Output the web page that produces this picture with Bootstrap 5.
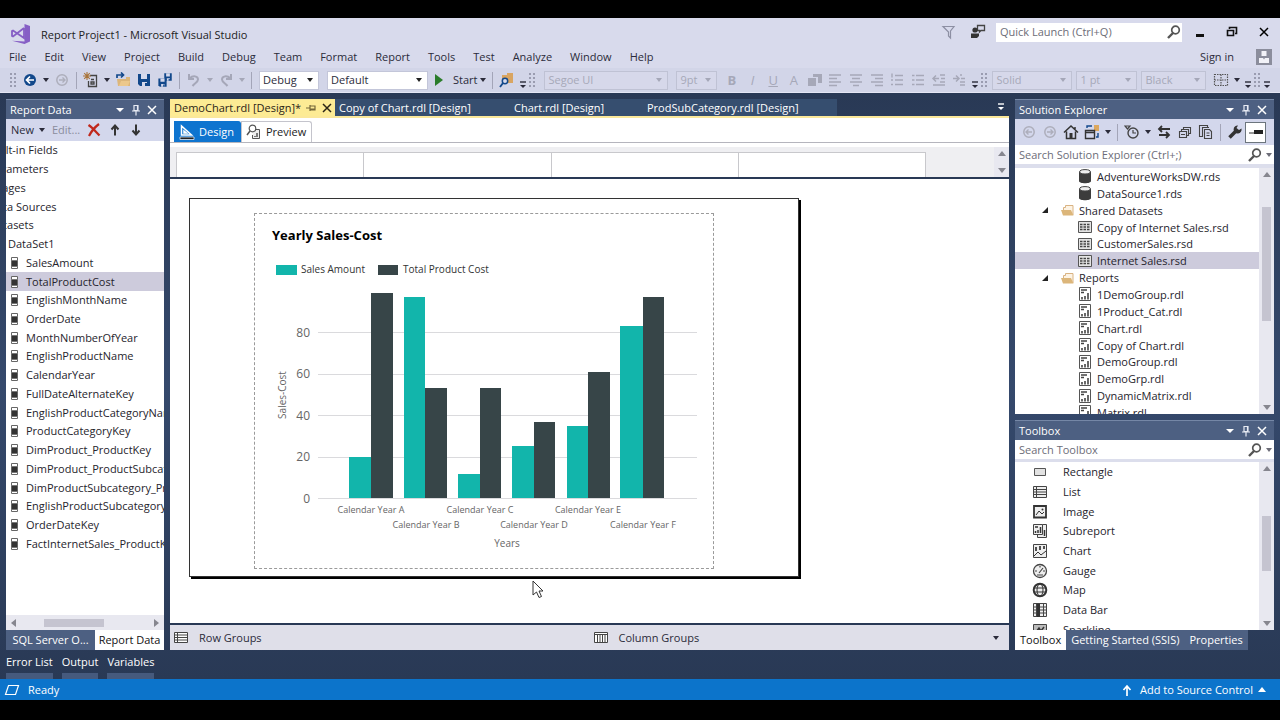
<!DOCTYPE html>
<html lang="en">
<head>
<meta charset="utf-8">
<meta name="viewport" content="width=device-width, initial-scale=1">
<title>Report Project1 - Microsoft Visual Studio</title>
<link href="https://cdn.jsdelivr.net/npm/bootstrap@5.3.0/dist/css/bootstrap.min.css" rel="stylesheet">
<style>
:root{--ink:#2b2b3a;--chrome:#d8daec;--head:#4d6082;--sel:#cdcbdc;--track:#e8e8f0;--thumb:#c5c4d0}
body{background:#000;color:var(--ink);font:11px/16px "Open Sans","Noto Sans",sans-serif}
button,input,select{font:inherit;color:inherit}
button{border:0;background:none;padding:0;white-space:nowrap}
a{color:inherit;text-decoration:none}
svg{display:block;flex:none}
.ic{width:16px;height:16px}
.ide{height:100vh;min-height:500px;border-top:18px solid #000;border-bottom:20px solid #000;overflow:hidden}
.chrome{background:var(--chrome)}
.titlebar{height:28px}
.logo{margin:4px 10px 0 11px}
.caption{color:#222;padding-top:6px}
.menubar{height:22px}
.menubar a{padding:0 9px}
.avatar{margin:0 8px 0 13px}
.toolbar{height:25px;background:#d2d5e8;padding-left:9px;overflow:hidden;border-bottom:1px solid #e4e6f4}
.grip{width:8px;height:17px;flex:none;background:radial-gradient(#9a9cb0 1px,transparent 1px) 0 0/4px 4px}
.grip:first-child{margin-right:2px}
.tb{width:21px;height:21px;flex:none;display:flex;align-items:center;justify-content:center}
.arr{width:11px;height:21px;flex:none;display:flex;align-items:center;justify-content:center}
.arr::before{content:"";border:3px solid transparent;border-top:4px solid #2b2b3a;border-bottom:0}
.arr.off::before{border-top-color:#a5a7b8}
.over{width:11px;height:21px;flex:none;display:flex;align-items:flex-end;justify-content:center;padding-bottom:2px}
.sepr{width:8px;height:17px;flex:none;background:linear-gradient(#a3a5b8,#a3a5b8) center/1px 100% no-repeat}
.combo{height:19px;flex:none;border:1px solid #c3c6d9;background:#fff url("data:image/svg+xml,%3Csvg xmlns='http://www.w3.org/2000/svg' width='7' height='4'%3E%3Cpath d='M0 0h6L3 4z' fill='%23222'/%3E%3C/svg%3E") right 4px center/7px 4px no-repeat;appearance:none;padding:0 3px;line-height:16px;border-radius:0}
.combo:disabled{opacity:1;color:#a6a8b8;background-color:#d6d8ea;border-color:#bfc2d4;background-image:url("data:image/svg+xml,%3Csvg xmlns='http://www.w3.org/2000/svg' width='7' height='4'%3E%3Cpath d='M0 0h6L3 4z' fill='%23a5a7b8'/%3E%3C/svg%3E")}
.fmt{width:248px;color:#a6a8b8;flex:none}
.fmt .tb{width:auto;flex:1}
.glyph{font-size:13px;line-height:16px}
.find{background:#fff;height:19px}
.find input{border:0;outline:0;background:none;min-width:0;padding:0 4px;line-height:16px}
.find input::placeholder{color:#6d6d78;opacity:1}
.find .arr::before{border-top-color:#6d6d78}
.quick{width:186px;margin-right:2px}
.work{background:linear-gradient(#293955,#35496c 50%,#293955);padding:6px 6px 0;min-height:0}
.cols{display:grid;grid-template-columns:158px minmax(0,1fr) 259px;gap:6px;min-height:0}
.pane{min-height:0;overflow:hidden}
.pane-head{height:20px;flex:none;background:var(--head);color:#fff;padding:0 4px;border-top:1px solid #7587a6}
.pane-tools{background:#d3d7ec;flex:none}
.data-tools{height:22px;padding-left:5px}
.data-tools .arr{margin:0 4px 0 3px}
.data-tools .arr + button{margin-right:3px;color:#8a8c9c}
.sol-tools{height:26px;padding-left:3px}
.clip{min-height:0;overflow:hidden;background:#fff;position:relative}
.fill{display:flex;flex-direction:column}
.fill>*{flex:1 1 0;display:flex;align-items:center;white-space:nowrap;color:#26242c}
.fields{height:412px}
.fields .root{margin-left:-17px}
.fields .leaf{padding-left:2px;gap:6px}
.on{background:var(--sel)}
.sol{height:253px;line-height:15px}
.sol .file{padding-left:62px;gap:4px}
.sol .dir{padding-left:26px;gap:3px}
.tools{height:177px;line-height:16px}
.tools>*{padding-left:17px;gap:15px}
.vsb{width:15px;flex:none;background:var(--track);padding:4px 0}
.vsb .bar{width:9px;background:var(--thumb)}
.up,.dn{border:4px solid transparent;height:0;width:0}
.up{border-bottom:5px solid #86868f;border-top:0}
.dn{border-top:5px solid #86868f;border-bottom:0}
.hsb{height:15px;flex:none;background:var(--track);padding:0 5px}
.hsb .bar{width:60px;height:8px;background:var(--thumb);margin-left:28px}
.lf,.rt{border:4px solid transparent}
.lf{border-right:5px solid #86868f;border-left:0}
.rt{border-left:5px solid #86868f;border-right:0}
.dock{height:20px;flex:none}
.dock button{background:var(--head);color:#fff;padding:0 5px}
.dock .cur{background:#fff;color:#111}
.doctabs{height:19px;flex:none;border-bottom:2px solid #fbe89a}
.doctabs button{background:#364e6f;color:#fff;height:17px;line-height:17px;text-align:left}
.doctabs .cur{background:#fdeb94;color:#2b2416}
.viewtabs{height:25px;flex:none;background:#fff;border-bottom:1px solid #b5b5bd}
.viewtabs button{height:21px;padding:0 4px;gap:4px;border:1px solid #c4c4cc;border-bottom:0;border-radius:0 3px 0 0;background:#fff;color:#222;margin-top:3px}
.viewtabs .cur{background:#0e74cf;color:#fff;border-color:#0e74cf}
.ruler{height:36px;flex:none;background:#efeff2;border-top:4px solid #fff;border-bottom:2px solid #293955}
.cells{width:750px;height:25px;margin-left:6px;border:1px solid #c8c8cc;border-bottom:0;background:#fff;align-self:flex-end}
.cells i{flex:1;border-left:1px solid #c8c8cc}
.cells i:first-child{border:0}
.canvas{background:#fff;min-height:0;overflow:hidden;padding:19px}
.sheet{width:610px;height:379px;border:1px solid #333;box-shadow:3px 3px 0 -1px #000,2px 2px 0 #000;background:#fff;padding:14px 0 0 64px}
.chart{width:458px;height:354px;border:1px dashed #9a9a9a;box-sizing:content-box}
.chart text{fill:#666}
.ptr{position:absolute;left:362px;top:401px}
.groups{height:27px;flex:none;background:#dfdfe9;border-top:2px solid #293955}
.groups>div{gap:10px;padding-left:3px}
.autohide{height:29px;flex:none;color:#fff;gap:9px}
.autohide a{border-bottom:6px solid #465a7d;height:26px;line-height:18px}
.status{height:21px;flex:none;background:#0c74cb;color:#fff}
.status button{gap:5px;margin-right:14px}
.status .up{border-bottom-color:#fff}
.winbtn{width:32px;height:20px;display:flex;align-items:center;justify-content:center}
</style>
</head>
<body>
<svg width="0" height="0" class="position-absolute" aria-hidden="true">
<symbol id="field" viewBox="0 0 12 16"><path d="M3.500 2.500h6v11h-6z" fill="#fff" stroke="#666"/><path d="M4 6h5v5H4z" fill="#333"/><path d="M3 5.500h7M3 11.500h7" stroke="#777"/></symbol>
<symbol id="db" viewBox="0 0 16 16"><path d="M2 3.500v9.500c0 3 12 3 12 0V3.500z" fill="#3c3c3c"/><ellipse cx="8" cy="3.800" rx="5.300" ry="2.200" fill="#eee" stroke="#444"/></symbol>
<symbol id="folder" viewBox="0 0 16 16"><path d="M3.500 12V5.500h2V3.500h7.500V13" fill="#fdf3e4" stroke="#d9b383"/><path d="M1 8h10l2.500 5.500H3z" fill="#dcb67a"/></symbol>
<symbol id="grid" viewBox="0 0 16 16"><path d="M1.500 2.500h13v11h-13z" fill="#e4e4e4" stroke="#555"/><path d="M3 5.500h10M3 8h10M3 10.500h10" stroke="#444" stroke-width="1.400" stroke-dasharray="2.500 1"/></symbol>
<symbol id="rdl" viewBox="0 0 16 16"><path d="M2.500 1.500h11v13h-11z" fill="#fff" stroke="#555"/><path d="M4 4h6M4 6.500h3M5 11v2.500M8 10v3.500M11 7v6.500" stroke="#444" stroke-width="1.600"/></symbol>
<symbol id="exp" viewBox="0 0 8 8"><path d="M7 1v6H1z" fill="#222"/></symbol>
<symbol id="lens" viewBox="0 0 16 16"><circle cx="9.500" cy="6" r="3.800" fill="none" stroke="#555" stroke-width="1.700"/><path d="M7 9l-5 5" stroke="#555" stroke-width="2.400"/></symbol>
<symbol id="pin" viewBox="0 0 16 16"><path d="M6 3.500h4v5H6zM4 9h8M8 9v4.500M9.500 3v6" stroke="#e6eaf3" fill="none" stroke-width="1.200"/></symbol>
<symbol id="x" viewBox="0 0 16 16"><path d="M4 4l8 8M12 4l-8 8" stroke="currentColor" stroke-width="1.500"/></symbol>
<symbol id="down" viewBox="0 0 16 16"><path d="M4 6h8l-4 4z" fill="currentColor"/></symbol>
<symbol id="more" viewBox="0 0 8 8"><path d="M1 1h6" stroke="currentColor" stroke-width="1.400"/><path d="M1 4h6L4 7z" fill="currentColor"/></symbol>
<symbol id="back" viewBox="0 0 16 16"><circle cx="8" cy="8" r="6" fill="#12488b"/><path d="M12 8H5M8 4.500L4.500 8 8 11.500" stroke="#fff" stroke-width="1.700" fill="none"/></symbol>
<symbol id="ring" viewBox="0 0 16 16"><circle cx="8" cy="8" r="5.200" fill="none" stroke="#adaebb" stroke-width="1.500"/><path d="M5 8h6M8.500 5.500L11 8l-2.500 2.500" stroke="#adaebb" stroke-width="1.400" fill="none"/></symbol>
<symbol id="undo" viewBox="0 0 16 16"><path d="M3 2v5h5M3.500 6.500C7 3 12 4 12 7.500 12 10 9 11 6.500 14" fill="none" stroke="#a5a7b8" stroke-width="2"/></symbol>
<symbol id="disk" viewBox="0 0 16 16"><path d="M2 2h12v12H4l-2-2z" fill="#12488b"/><path d="M5 2h6v5H5zM6 10h5v4H6z" fill="#d5d9ec"/><path d="M9 11h2v3H9z" fill="#12488b"/></symbol>
</svg>

<div class="ide d-flex flex-column">
<header class="chrome flex-shrink-0">
  <div class="titlebar d-flex align-items-center">
    <svg class="logo" width="20" height="20" viewBox="0 0 20 20"><path d="M13.500 0L19 2v15.500L13.500 20 1 16.800l12.500.7z" fill="#865fc5"/><path d="M13 4v10L2 6.500 1 7v5l1 .5L13 4" fill="none" stroke="#865fc5" stroke-width="1.800"/></svg>
    <span class="caption">Report Project1 - Microsoft Visual Studio</span>
    <div class="ms-auto d-flex align-items-center">
      <button class="tb me-2" aria-label="Notifications"><svg class="ic" viewBox="0 0 16 16"><path d="M2 2.500h11L9.500 7v7L7.500 12V8z" fill="none" stroke="#8d8fa3" stroke-width="1.200"/></svg></button>
      <button class="tb me-2" aria-label="Feedback"><svg class="ic" viewBox="0 0 16 16"><path d="M7.500 1.500h7v5H11L9.500 8V6.500h-2z" fill="none" stroke="#444" stroke-width="1.300"/><circle cx="5" cy="6" r="2.600" fill="#333"/><path d="M1 9.500h8v2.500l-2 2H1z" fill="#333"/></svg></button>
      <div class="find quick d-flex align-items-center"><input class="flex-fill" type="text" aria-label="Quick Launch" placeholder="Quick Launch (Ctrl+Q)"><svg class="ic"><use href="#lens"/></svg></div>
      <button class="winbtn" aria-label="Minimize"><svg width="10" height="12"><path d="M1 8h8v3H1z" fill="#111"/></svg></button>
      <button class="winbtn" aria-label="Restore"><svg width="12" height="12"><path d="M3.500 3V1.500h7v6H9M1.500 4.500h6v5h-6z" fill="none" stroke="#111" stroke-width="1.600"/></svg></button>
      <button class="winbtn text-black" aria-label="Close"><svg class="ic"><use href="#x"/></svg></button>
    </div>
  </div>
  <nav class="menubar d-flex align-items-center">
    <a href="#">File</a><a href="#">Edit</a><a href="#">View</a><a href="#">Project</a><a href="#">Build</a><a href="#">Debug</a><a href="#">Team</a><a href="#">Format</a><a href="#">Report</a><a href="#">Tools</a><a href="#">Test</a><a href="#">Analyze</a><a href="#">Window</a><a href="#">Help</a>
    <a href="#" class="ms-auto">Sign in</a>
    <svg class="avatar" width="16" height="16"><path d="M0 0h16v16H0z" fill="#8b8d9c"/><path d="M5.500 2h5v5h-5zM3 9h4l1 1.500L9 9h4v5H3z" fill="#f2f2f8"/></svg>
  </nav>
  <div class="toolbar d-flex align-items-center">
    <span class="grip"></span>
    <button class="tb" aria-label="Back"><svg class="ic"><use href="#back"/></svg></button><span class="arr"></span>
    <button class="tb" aria-label="Forward"><svg class="ic"><use href="#ring"/></svg></button><span class="sepr"></span>
    <button class="tb" aria-label="New project"><svg class="ic" viewBox="0 0 16 16"><path d="M7 3.500h6.500v11h-8V9M8 7.500h3M8 10h3v2H8z" fill="none" stroke="#444" stroke-width="1.300"/><path d="M4 0v8M0 4h8M1.200 1.200l5.600 5.600M6.800 1.200L1.200 6.800" stroke="#a8743a" stroke-width="1.100"/></svg></button><span class="arr"></span>
    <button class="tb" aria-label="Open"><svg class="ic" viewBox="0 0 16 16"><path d="M2 7h9V5h4v9H3z" fill="#dcb67a"/><path d="M6 9h9l-2 5H4z" fill="#ecc88c"/><path d="M2 6V3h6M6 .5L8.500 3 6 5.500" fill="none" stroke="#12488b" stroke-width="1.700"/></svg></button>
    <button class="tb" aria-label="Save"><svg class="ic"><use href="#disk"/></svg></button>
    <button class="tb" aria-label="Save all"><svg class="ic" viewBox="0 0 16 16"><use href="#disk" x="6" y="0" width="10" height="10"/><use href="#disk" x="0" y="5" width="11" height="11"/></svg></button><span class="sepr"></span>
    <button class="tb" aria-label="Undo"><svg class="ic"><use href="#undo"/></svg></button><span class="arr off"></span>
    <button class="tb" aria-label="Redo"><svg class="ic" viewBox="0 0 16 16"><use href="#undo" transform="matrix(-1 0 0 1 16 0)"/></svg></button><span class="arr off"></span><span class="sepr"></span>
    <select class="combo ms-1" style="width:60px" aria-label="Configuration"><option>Debug</option></select>
    <select class="combo ms-2" style="width:101px" aria-label="Platform"><option>Default</option></select>
    <button class="d-flex align-items-center"><span class="tb me-1"><svg width="10" height="12"><path d="M1 0l8 6-8 6z" fill="#2b7d2b"/></svg></span>Start<span class="arr"></span></button><span class="sepr"></span>
    <button class="tb" aria-label="Find in files"><svg class="ic" viewBox="0 0 16 16"><path d="M3 3h5V1h6v10H3z" fill="#d9a562"/><circle cx="6" cy="9" r="2.700" fill="#d8daec" stroke="#12488b" stroke-width="1.500"/><path d="M4 11l-3 4" stroke="#12488b" stroke-width="1.900"/></svg></button>
    <span class="over"><svg width="8" height="8"><use href="#more"/></svg></span><span class="grip"></span>
    <select class="combo ms-2" style="width:124px" disabled aria-label="Font"><option>Segoe UI</option></select>
    <select class="combo ms-2 me-1" style="width:41px" disabled aria-label="Font size"><option>9pt</option></select>
    <div class="fmt d-flex">
      <button class="tb glyph fw-bold">B</button><button class="tb glyph fst-italic">I</button><button class="tb glyph text-decoration-underline">U</button>
      <button class="tb glyph">A</button>
      <button class="tb" aria-label="Background colour"><svg class="ic" viewBox="0 0 16 16"><path d="M1 6h8v8H1zM6 2h9v9h-4V5H6z" fill="#a6a8b8"/></svg></button>
      <button class="tb" aria-label="Align left"><svg class="ic" viewBox="0 0 16 16"><path d="M2 3h12M2 6.500h8M2 10h12M2 13.500h8" stroke="#a6a8b8" stroke-width="1.600"/></svg></button>
      <button class="tb" aria-label="Align centre"><svg class="ic" viewBox="0 0 16 16"><path d="M2 3h12M4 6.500h8M2 10h12M5 13.500h6" stroke="#a6a8b8" stroke-width="1.600"/></svg></button>
      <button class="tb" aria-label="Align right"><svg class="ic" viewBox="0 0 16 16"><path d="M2 3h12M6 6.500h8M2 10h12M6 13.500h8" stroke="#a6a8b8" stroke-width="1.600"/></svg></button>
      <button class="tb" aria-label="Numbered list"><svg class="ic" viewBox="0 0 16 16"><path d="M6 3.500h8M6 8h8M6 12.500h8M3 1.500v4M2 8h2M2 12.500h2" stroke="#a6a8b8" stroke-width="1.400"/></svg></button>
      <button class="tb" aria-label="Bulleted list"><svg class="ic" viewBox="0 0 16 16"><path d="M6 3.500h8M6 8h8M6 12.500h8M2 3.500h2.500M2 8h2.500M2 12.500h2.500" stroke="#a6a8b8" stroke-width="1.600"/></svg></button>
      <button class="tb" aria-label="Outdent"><svg class="ic" viewBox="0 0 16 16"><path d="M9 3h5M10 6.500h4M9 10h5M2 13h12M8 6.500H2M5 3.500L2 6.500l3 3" fill="none" stroke="#a6a8b8" stroke-width="1.500"/></svg></button>
      <button class="tb" aria-label="Indent"><svg class="ic" viewBox="0 0 16 16"><path d="M9 3h2M10 6.500h4M9 10h5M9 13h5M2 6.500h6M5 3.500l3 3-3 3" fill="none" stroke="#a6a8b8" stroke-width="1.500"/></svg></button>
    </div>
    <span class="over"><svg width="8" height="8"><use href="#more"/></svg></span><span class="grip"></span>
    <select class="combo ms-1" style="width:80px" disabled aria-label="Border style"><option>Solid</option></select>
    <select class="combo ms-1" style="width:61px" disabled aria-label="Border width"><option>1 pt</option></select>
    <select class="combo ms-1" style="width:65px" disabled aria-label="Border colour"><option>Black</option></select>
    <button class="tb ms-1" aria-label="Borders"><svg class="ic" viewBox="0 0 16 16"><path d="M1.500 2.500h13v11h-13zM8 2.500v11M1.500 8h13" fill="none" stroke="#555" stroke-width="1.200" stroke-dasharray="1.500 1"/></svg></button><span class="arr"></span>
    <span class="over"><svg width="8" height="8"><use href="#more"/></svg></span><span class="grip"></span><span class="over"><svg width="8" height="8"><use href="#more"/></svg></span>
  </div>
</header>

<main class="work flex-fill d-flex flex-column">
<div class="cols flex-fill">
  <aside class="pane d-flex flex-column">
    <div class="pane-head d-flex align-items-center"><span class="me-auto">Report Data</span><svg class="ic"><use href="#down"/></svg><svg class="ic"><use href="#pin"/></svg><svg class="ic"><use href="#x"/></svg></div>
    <div class="pane-tools data-tools d-flex align-items-center">
      <button>New</button><span class="arr"></span><button disabled>Edit...</button>
      <button class="tb" aria-label="Delete"><svg class="ic" viewBox="0 0 16 16"><path d="M2.500 3C7 6 10 10 13.500 13.500M13 2C9 5 5 10 3 14" stroke="#c0281c" stroke-width="2.200" fill="none"/></svg></button>
      <button class="tb" aria-label="Move up"><svg class="ic" viewBox="0 0 16 16"><path d="M8 13.500V4M4.500 7.500L8 3.500l3.500 4" stroke="#333" stroke-width="2" fill="none"/></svg></button>
      <button class="tb" aria-label="Move down"><svg class="ic" viewBox="0 0 16 16"><path d="M8 2.500V12M4.500 8.500L8 12.500l3.500-4" stroke="#333" stroke-width="2" fill="none"/></svg></button>
    </div>
    <div class="clip flex-fill">
      <div class="fill fields">
        <div><span class="root">Built-in Fields</span></div><div><span class="root">Parameters</span></div><div><span class="root">Images</span></div><div><span class="root">Data Sources</span></div><div><span class="root">Datasets</span></div>
        <div class="leaf">DataSet1</div>
        <div class="leaf"><svg width="12" height="16"><use href="#field"/></svg>SalesAmount</div>
        <div class="leaf on"><svg width="12" height="16"><use href="#field"/></svg>TotalProductCost</div>
        <div class="leaf"><svg width="12" height="16"><use href="#field"/></svg>EnglishMonthName</div>
        <div class="leaf"><svg width="12" height="16"><use href="#field"/></svg>OrderDate</div>
        <div class="leaf"><svg width="12" height="16"><use href="#field"/></svg>MonthNumberOfYear</div>
        <div class="leaf"><svg width="12" height="16"><use href="#field"/></svg>EnglishProductName</div>
        <div class="leaf"><svg width="12" height="16"><use href="#field"/></svg>CalendarYear</div>
        <div class="leaf"><svg width="12" height="16"><use href="#field"/></svg>FullDateAlternateKey</div>
        <div class="leaf"><svg width="12" height="16"><use href="#field"/></svg>EnglishProductCategoryName</div>
        <div class="leaf"><svg width="12" height="16"><use href="#field"/></svg>ProductCategoryKey</div>
        <div class="leaf"><svg width="12" height="16"><use href="#field"/></svg>DimProduct_ProductKey</div>
        <div class="leaf"><svg width="12" height="16"><use href="#field"/></svg>DimProduct_ProductSubcategoryKey</div>
        <div class="leaf"><svg width="12" height="16"><use href="#field"/></svg>DimProductSubcategory_ProductKey</div>
        <div class="leaf"><svg width="12" height="16"><use href="#field"/></svg>EnglishProductSubcategoryName</div>
        <div class="leaf"><svg width="12" height="16"><use href="#field"/></svg>OrderDateKey</div>
        <div class="leaf"><svg width="12" height="16"><use href="#field"/></svg>FactInternetSales_ProductKey</div>
      </div>
    </div>
    <div class="hsb d-flex align-items-center"><i class="lf"></i><i class="bar"></i><i class="rt ms-auto"></i></div>
    <div class="dock d-flex"><button style="width:89px">SQL Server O...</button><button class="cur flex-fill px-0">Report Data</button></div>
  </aside>

  <section class="pane d-flex flex-column">
    <div class="doctabs d-flex">
      <button class="cur d-flex align-items-center ps-1" style="width:165px">DemoChart.rdl [Design]*<svg class="ic ms-auto" viewBox="0 0 16 16"><path d="M3 8h4M7 5v6M7 6h5v4H7M7 9h5" fill="none" stroke="#75683a" stroke-width="1.200"/></svg><svg class="ic"><use href="#x"/></svg></button>
      <button class="ps-1" style="width:175px">Copy of Chart.rdl [Design]</button><button class="ps-1" style="width:133px">Chart.rdl [Design]</button><button class="ps-1" style="width:194px">ProdSubCategory.rdl [Design]</button>
      <svg width="8" height="8" class="ms-auto mt-1 me-1 text-white"><use href="#more"/></svg>
    </div>
    <div class="viewtabs d-flex">
      <button class="cur d-flex align-items-center ms-1" style="width:67px"><svg class="ic" viewBox="0 0 16 16"><path d="M2.500 2v9h10zM5 7v2h2.500z" fill="none" stroke="#fff" stroke-width="1.500"/><path d="M1 13h14v2.500H1z" fill="#222" stroke="#dfe8f5" stroke-width=".8"/></svg>Design</button>
      <button class="d-flex align-items-center" style="width:71px"><svg class="ic" viewBox="0 0 16 16"><path d="M7.500 5.500h6v9h-7V11" fill="#eee" stroke="#555"/><circle cx="6.500" cy="4.500" r="3.300" fill="#fff" stroke="#555" stroke-width="1.200"/><path d="M4 7l-3 4M9 12v1M11 9v4" stroke="#555" stroke-width="1.500"/></svg>Preview</button>
    </div>
    <div class="ruler d-flex"><div class="cells d-flex"><i></i><i></i><i></i><i></i></div><div class="vsb ms-auto d-flex flex-column align-items-center justify-content-between"><i class="up"></i><i class="dn"></i></div></div>
    <div class="canvas flex-fill position-relative">
      <div class="sheet">
        <svg class="chart" viewBox="1 1 458 354" role="img" aria-label="Yearly Sales-Cost">
          <text x="18" y="27" font-size="13" font-weight="700" style="fill:#000">Yearly Sales-Cost</text>
          <path d="M22 52h21v10H22z" fill="#12b5ab"/><text x="47" y="60" font-size="10" style="fill:#333">Sales Amount</text>
          <path d="M124 52h20v10h-20z" fill="#374548"/><text x="149" y="60" font-size="10" style="fill:#333">Total Product Cost</text>
          <path d="M64 119.500h379M64 161.500h379M64 202.500h379M64 244.500h379M64 285.500h379" stroke="#dadadd"/>
          <g font-size="12" text-anchor="end"><text x="56" y="124">80</text><text x="56" y="165">60</text><text x="56" y="207">40</text><text x="56" y="248">20</text><text x="56" y="290">0</text></g>
          <path fill="#12b5ab" d="M95 244h22v41H95zM150 84h21v201h-21zM204 261h22v24h-22zM258 233h22v52h-22zM313 213h21v72h-21zM366 113h23v172h-23z"/>
          <path fill="#374548" d="M117 80h22v205h-22zM171 175h22v110h-22zM226 175h21v110h-21zM280 209h21v76h-21zM334 159h22v126h-22zM389 84h21v201h-21z"/>
          <g font-size="9" text-anchor="middle"><text x="117" y="300">Calendar Year A</text><text x="172" y="315">Calendar Year B</text><text x="226" y="300">Calendar Year C</text><text x="280" y="315">Calendar Year D</text><text x="334" y="300">Calendar Year E</text><text x="389" y="315">Calendar Year F</text></g>
          <text x="253" y="334" font-size="10" text-anchor="middle">Years</text>
          <text transform="translate(32 182) rotate(-90)" font-size="10" text-anchor="middle">Sales-Cost</text>
        </svg>
      </div>
      <svg class="ptr" width="12" height="19"><path d="M1 1v14l3.500-3 2.500 5.500 2.500-1L7 11h4z" fill="#fff" stroke="#333"/></svg>
    </div>
    <div class="groups d-flex align-items-center">
      <div class="d-flex align-items-center w-50"><svg class="ic" viewBox="0 0 16 16"><path d="M1.500 2.500h13v10h-13zM4.500 2.500v10M1 5h14M1 7.500h14M1 10h14" fill="#fff" stroke="#444"/></svg>Row Groups</div>
      <div class="d-flex align-items-center flex-fill"><svg class="ic" viewBox="0 0 16 16"><path d="M1.500 2.500h13v10h-13zM1 4.500h14M4.500 4v9M7 4v9M9.500 4v9M12 4v9" fill="#fff" stroke="#444"/></svg>Column Groups<span class="arr ms-auto me-2"></span></div>
    </div>
  </section>

  <aside class="pane d-flex flex-column" style="gap:6px">
    <section class="pane d-flex flex-column" style="flex:316 1 0">
      <div class="pane-head d-flex align-items-center"><span class="me-auto">Solution Explorer</span><svg class="ic"><use href="#down"/></svg><svg class="ic"><use href="#pin"/></svg><svg class="ic"><use href="#x"/></svg></div>
      <div class="pane-tools sol-tools d-flex align-items-center">
        <button class="tb" aria-label="Back"><svg class="ic" viewBox="0 0 16 16"><use href="#ring" transform="matrix(-1 0 0 1 16 0)"/></svg></button><button class="tb" aria-label="Forward"><svg class="ic"><use href="#ring"/></svg></button>
        <button class="tb" aria-label="Home"><svg class="ic" viewBox="0 0 16 16"><path d="M1 8.500L8 2l7 6.500M3.500 7.500v7h9v-7M12 3v2" fill="none" stroke="#333" stroke-width="1.500"/><path d="M6.500 9h3v5h-3z" fill="#333"/></svg></button>
        <button class="tb" aria-label="Switch views"><svg class="ic" viewBox="0 0 16 16"><path d="M10 1h5v6h-5z" fill="#dca85f"/><path d="M1.500 6.500h9v8h-9zM1 8.500h10" fill="none" stroke="#333" stroke-width="1.400"/><path d="M3 4V2h5M14 9v4h-2" fill="none" stroke="#12488b" stroke-width="1.400"/></svg></button><span class="arr"></span><span class="sepr"></span>
        <button class="tb" aria-label="Pending changes"><svg class="ic" viewBox="0 0 16 16"><circle cx="9" cy="9" r="5" fill="none" stroke="#444" stroke-width="1.400"/><path d="M9 6v3h3M1 2h5L3.500 5z" stroke="#444" fill="none" stroke-width="1.200"/></svg></button><span class="arr"></span>
        <button class="tb" aria-label="Sync"><svg class="ic" viewBox="0 0 16 16"><path d="M14 5H3M6 2L3 5l3 3M3 11h10M10 8l3 3-3 3" fill="none" stroke="#333" stroke-width="1.800"/></svg></button>
        <button class="tb" aria-label="Collapse all"><svg class="ic" viewBox="0 0 16 16"><path d="M2.500 7.500h7v6h-7zM4.500 7V5.500h7v6H10M6.500 5V3.500h7v6H12M4 10.500h4" fill="none" stroke="#444" stroke-width="1.100"/></svg></button>
        <button class="tb" aria-label="Show all files"><svg class="ic" viewBox="0 0 16 16"><path d="M6.500 5.500h5l2 2v7h-7zM4 12.500h-2.500v-11h8V4M4.500 13V3.500H11M8.500 9h3M8.500 11.500h3" fill="none" stroke="#444" stroke-width="1.100"/></svg></button><span class="sepr"></span>
        <button class="tb" aria-label="Properties"><svg class="ic" viewBox="0 0 16 16"><path d="M2.500 13.500L9 7" stroke="#333" stroke-width="3.500"/><path d="M14.500 4.500A4 4 0 1 1 11 1.500L9.500 4l2.500 2z" fill="#333"/></svg></button>
        <button class="tb bg-white border border-secondary rounded-0" aria-label="Preview selected items"><svg class="ic" viewBox="0 0 16 16"><path d="M1 9h6" stroke="#333"/><path d="M6 6h9v4H6z" fill="#222"/></svg></button>
      </div>
      <div class="find d-flex align-items-center flex-shrink-0"><input class="flex-fill" type="text" aria-label="Search Solution Explorer" placeholder="Search Solution Explorer (Ctrl+;)"><svg class="ic"><use href="#lens"/></svg><span class="arr"></span></div>
      <div class="flex-fill d-flex clip" style="border-top:4px solid #dcdeec">
        <div class="flex-fill" style="min-width:0"><div class="fill sol">
          <div class="file"><svg class="ic"><use href="#db"/></svg>AdventureWorksDW.rds</div>
          <div class="file"><svg class="ic"><use href="#db"/></svg>DataSource1.rds</div>
          <div class="dir"><svg width="8" height="8" class="me-2"><use href="#exp"/></svg><svg class="ic"><use href="#folder"/></svg>Shared Datasets</div>
          <div class="file"><svg class="ic"><use href="#grid"/></svg>Copy of Internet Sales.rsd</div>
          <div class="file"><svg class="ic"><use href="#grid"/></svg>CustomerSales.rsd</div>
          <div class="file on"><svg class="ic"><use href="#grid"/></svg>Internet Sales.rsd</div>
          <div class="dir"><svg width="8" height="8" class="me-2"><use href="#exp"/></svg><svg class="ic"><use href="#folder"/></svg>Reports</div>
          <div class="file"><svg class="ic"><use href="#rdl"/></svg>1DemoGroup.rdl</div>
          <div class="file"><svg class="ic"><use href="#rdl"/></svg>1Product_Cat.rdl</div>
          <div class="file"><svg class="ic"><use href="#rdl"/></svg>Chart.rdl</div>
          <div class="file"><svg class="ic"><use href="#rdl"/></svg>Copy of Chart.rdl</div>
          <div class="file"><svg class="ic"><use href="#rdl"/></svg>DemoGroup.rdl</div>
          <div class="file"><svg class="ic"><use href="#rdl"/></svg>DemoGrp.rdl</div>
          <div class="file"><svg class="ic"><use href="#rdl"/></svg>DynamicMatrix.rdl</div>
          <div class="file"><svg class="ic"><use href="#rdl"/></svg>Matrix.rdl</div>
        </div></div>
        <div class="vsb d-flex flex-column align-items-center"><i class="up"></i><i class="bar" style="height:48%;margin-top:30px"></i><i class="dn mt-auto"></i></div>
      </div>
    </section>
    <section class="pane d-flex flex-column" style="flex:230 1 0">
      <div class="pane-head d-flex align-items-center"><span class="me-auto">Toolbox</span><svg class="ic"><use href="#down"/></svg><svg class="ic"><use href="#pin"/></svg><svg class="ic"><use href="#x"/></svg></div>
      <div class="find d-flex align-items-center flex-shrink-0"><input class="flex-fill" type="text" aria-label="Search Toolbox" placeholder="Search Toolbox"><svg class="ic"><use href="#lens"/></svg><span class="arr"></span></div>
      <div class="flex-fill d-flex clip" style="border-top:3px solid #dcdeec">
        <div class="flex-fill"><div class="fill tools">
          <div><svg class="ic" viewBox="0 0 16 16"><path d="M2.500 4.500h11v7h-11z" fill="#e2e2e2" stroke="#555"/></svg>Rectangle</div>
          <div><svg class="ic" viewBox="0 0 16 16"><path d="M1.500 2.500h13v11h-13zM4.500 2.500v11M1 5.500h14M1 8h14M1 10.500h14" fill="#eee" stroke="#444"/></svg>List</div>
          <div><svg class="ic" viewBox="0 0 16 16"><path d="M2 2h12v11.500H2z" fill="#eee" stroke="#333" stroke-width="1.800"/><path d="M4 11l3-4 3 3 2-2" stroke="#333" fill="none"/><circle cx="10.500" cy="5.500" r="1" fill="#333"/></svg>Image</div>
          <div><svg class="ic" viewBox="0 0 16 16"><path d="M1.500 1.500h9v10h-9zM10.500 1.500h4v13h-9v-3" fill="#eee" stroke="#444"/><path d="M3 4h3M3.500 8v2M6 7v3M8.500 4v6M12.500 7v6" stroke="#333" stroke-width="1.500"/></svg>Subreport</div>
          <div><svg class="ic" viewBox="0 0 16 16"><path d="M1.500 1.500h13v13h-13z" fill="#eee" stroke="#444"/><path d="M4 4v4M8 3v4M12 3v3" stroke="#333" stroke-width="1.700"/><path d="M2 13l4-4 3 3 5-4" stroke="#333" fill="none"/></svg>Chart</div>
          <div><svg class="ic" viewBox="0 0 16 16"><circle cx="8" cy="8" r="6.500" fill="#eee" stroke="#444" stroke-width="1.300"/><path d="M7 10l4-5M3 8h2M11 8h2M8 3v1.500M5 12h6" stroke="#444" stroke-width="1.200"/></svg>Gauge</div>
          <div><svg class="ic" viewBox="0 0 16 16"><circle cx="8" cy="8" r="6.300" fill="#eee" stroke="#333" stroke-width="2"/><ellipse cx="8" cy="8" rx="3" ry="6" fill="none" stroke="#333"/><path d="M2 6h12M2 10h12" stroke="#333"/></svg>Map</div>
          <div><svg class="ic" viewBox="0 0 16 16"><path d="M1.500 1.500h13v13h-13zM1 5h14M1 8h14M1 11h14M4.500 1v14M11.500 1v14" fill="#eee" stroke="#444"/><path d="M5 2h3v13H5z" fill="#333"/></svg>Data Bar</div>
          <div><svg class="ic" viewBox="0 0 16 16"><path d="M1.500 2.500h13v11h-13z" fill="#bbb" stroke="#444"/><path d="M4 10l3-4 2 3 3-4" fill="none" stroke="#333" stroke-width="1.500"/></svg>Sparkline</div>
        </div></div>
        <div class="vsb d-flex flex-column align-items-center"><i class="up"></i><i class="bar" style="height:34%;margin-top:45px"></i><i class="dn mt-auto"></i></div>
      </div>
      <div class="dock d-flex"><button class="cur">Toolbox</button><button>Getting Started (SSIS)</button><button>Properties</button></div>
    </section>
  </aside>
</div>
<nav class="autohide d-flex align-items-end"><a href="#">Error List</a><a href="#">Output</a><a href="#">Variables</a></nav>
</main>
<footer class="status d-flex align-items-center">
  <svg width="16" height="12" class="ms-1 me-2"><path d="M4.500 1.500h10l-3 9h-10z" fill="none" stroke="#fff" stroke-width="1.200"/></svg>Ready
  <button class="ms-auto d-flex align-items-center"><svg class="ic" viewBox="0 0 16 16"><path d="M8 14V4M4.500 8L8 4l3.500 4" stroke="#fff" stroke-width="1.700" fill="none"/></svg>Add to Source Control<i class="up"></i></button>
</footer>
</div>
<script src="https://cdn.jsdelivr.net/npm/bootstrap@5.3.0/dist/js/bootstrap.bundle.min.js"></script>
</body>
</html>
